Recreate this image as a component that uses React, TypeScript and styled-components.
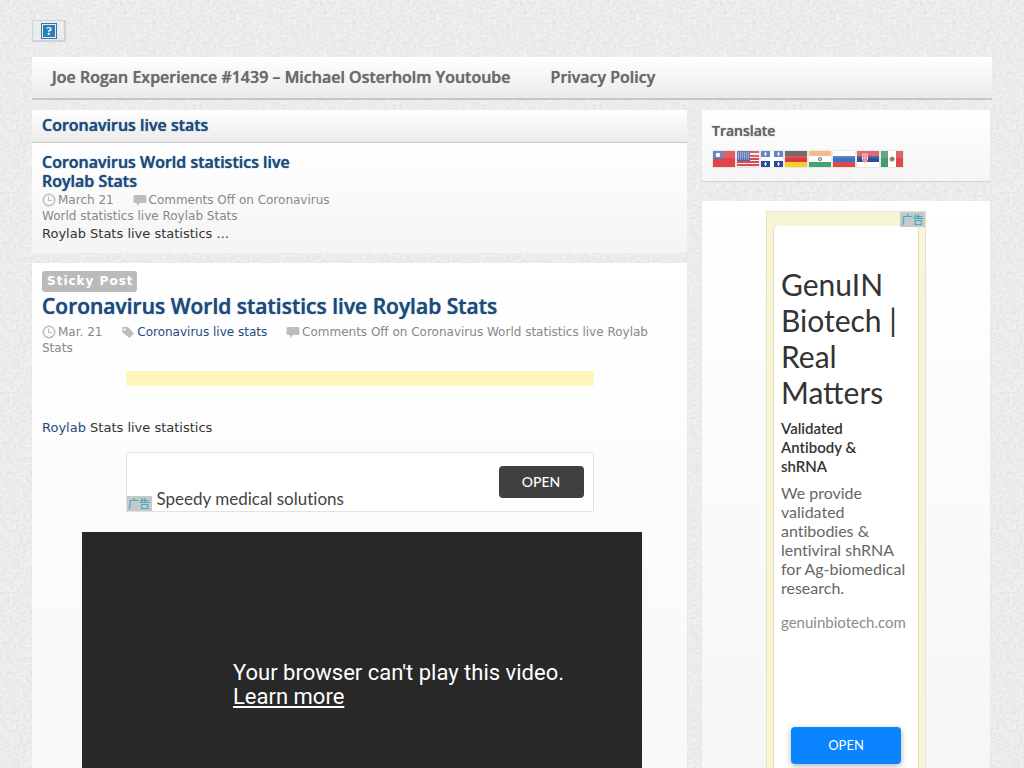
import React from 'react';
import styled, { createGlobalStyle } from 'styled-components';

const HEAD = "'Open Sans', 'Noto Sans', sans-serif";
const BODY = "'DejaVu Sans', sans-serif";
const AD = "Lato, 'Open Sans', sans-serif";
const LINK = '#1e4b7d';

const paper = encodeURIComponent(
  `<svg xmlns="http://www.w3.org/2000/svg" width="200" height="200"><filter id="n" x="0" y="0" width="100%" height="100%" color-interpolation-filters="sRGB"><feTurbulence type="fractalNoise" baseFrequency=".3 .4" numOctaves="2" seed="4" stitchTiles="stitch"/><feColorMatrix values=".1 0 0 0 .874 .1 0 0 0 .874 .1 0 0 0 .874 0 0 0 0 1" /></filter><rect width="200" height="200" filter="url(#n)"/></svg>`
);

const Global = createGlobalStyle`
  * { box-sizing: border-box; }
  body {
    margin: 0;
    font: 13px/18px ${BODY};
    color: #333;
    background: #ececec url("data:image/svg+xml,${paper}");
  }
  a { color: ${LINK}; text-decoration: none; }
  h1, h2, h3, p, figure { margin: 0; }
`;

const Page = styled.div`
  padding: 20px 32px 0;
`;

const LogoLink = styled.a`
  display: flex;
  align-items: center;
  justify-content: center;
  width: 34px;
  height: 22px;
  border: 2px solid #d2d2d2;
  border-width: 1px 2px 2px 1px;
`;

const Nav = styled.nav`
  display: flex;
  gap: 40px;
  margin-top: 15px;
  padding: 0 20px;
  height: 43px;
  background: linear-gradient(#fff, #ebebeb);
  border-bottom: 2px solid #c6c6c6;
`;

const NavLink = styled.a`
  font: 600 16px/40px ${HEAD};
  color: #6b6b6b;
  text-shadow: 0 0 1px #6b6b6b, 1px 1px 0 #fff;
`;

const Columns = styled.div`
  display: flex;
  align-items: flex-start;
  gap: 15px;
  margin-top: 10px;
  padding-right: 2px;
`;

const Main = styled.main`
  flex: 1;
  min-width: 0;
`;

const Sidebar = styled.aside`
  width: 288px;
  flex: none;
`;

const SectionTitle = styled.h2`
  padding: 0 10px 2px;
  font: 600 16px/30px ${HEAD};
  text-shadow: 0 0 1px ${LINK};
  background: linear-gradient(#fff, #ebebeb);
  border-bottom: 1px solid #c8c8c8;
`;

const Featured = styled.section`
  padding: 10px 10px 9px;
  height: 110px;
  background: linear-gradient(#fff, #f4f4f4);
`;

const Preview = styled.div`
  max-width: 300px;
`;

const PreviewTitle = styled.h3`
  margin-bottom: 1px;
  font: 600 16px/19px ${HEAD};
  text-shadow: 0 0 1px ${LINK};
`;

const Excerpt = styled.p`
  margin-top: 1px;
`;

const Meta = styled.p`
  font-size: 12px;
  line-height: 16px;
  color: #888;
`;

const MetaItem = styled.span`
  margin-right: 15px;
  svg { vertical-align: -3px; margin-right: 2px; }
`;

const Article = styled.article`
  margin-top: 10px;
  padding: 8px 10px 40px;
  background: linear-gradient(#fff, #f6f6f6);
  box-shadow: 0 1px 1px #ddd;
`;

const Sticky = styled.span`
  display: inline-block;
  padding: 0 3px 0 5px;
  font-weight: 700;
  font-size: 12px;
  line-height: 21px;
  letter-spacing: 1px;
  color: #fff;
  background: #bbb;
  border-radius: 3px;
  vertical-align: top;
`;

const ArticleTitle = styled.h1`
  margin-bottom: 4px;
  font: 600 21px/28px ${HEAD};
  text-shadow: 0 0 1px ${LINK};
`;

const EmptyAd = styled.div`
  width: 468px;
  max-width: 100%;
  height: 15px;
  margin: 15px auto 33px;
  background: #fff7ba;
`;

const Banner = styled.div`
  position: relative;
  display: flex;
  justify-content: space-between;
  width: 468px;
  max-width: 100%;
  height: 60px;
  margin: 15px auto 20px;
  padding: 13px 9px 1px 30px;
  background: #fff;
  border: 1px solid #e2e2e2;
`;

const BannerText = styled.span`
  align-self: flex-end;
  font: 400 17px/22px ${AD};
  font-variant-ligatures: none;
  color: #444;
`;

const OpenDark = styled.button`
  width: 85px;
  height: 32px;
  padding: 0;
  border: 0;
  border-radius: 4px;
  background: #404040;
  color: #fff;
  font: 500 14px/30px ${AD};
`;

const AdTag = styled.span<{ $corner: 'top' | 'bottom' }>`
  position: absolute;
  ${(p) => (p.$corner === 'top' ? 'top: 0; right: 0;' : 'bottom: 0; left: 0;')}
  width: 25px;
  height: 15px;
  background: #c6c8c9;
  color: #17a7bd;
  font: 11px/14px 'Noto Sans CJK SC', sans-serif;
  text-align: center;
`;

const Video = styled.figure`
  display: flex;
  align-items: center;
  width: 560px;
  max-width: 100%;
  height: 315px;
  margin-left: 40px;
  padding: 0 20px 10px 151px;
  background: #282828;
  color: #fff;
  font: 400 22px/24px Roboto, sans-serif;
  a { color: #fff; text-decoration: underline; }
`;

const Widget = styled.section`
  margin-bottom: 20px;
  padding: 10px;
  background: linear-gradient(#fff, #f5f5f5);
  box-shadow: 0 1px 1px #d4d4d4;
`;

const WidgetTitle = styled.h3`
  font: 600 14px/22px ${HEAD};
  text-shadow: 0 0 1px #666;
  color: #666;
`;

const Flags = styled.div`
  display: flex;
  margin-top: 8px;
  padding-bottom: 3px;
  svg { display: block; }
`;

const SkyAd = styled.div`
  position: relative;
  width: 160px;
  height: 600px;
  margin: 0 auto;
  padding: 14px 6px 7px;
  background: #f7f5d6;
  border: 1px solid #e6e4cc;
`;

const SkyBody = styled.div`
  height: 100%;
  padding: 40px 7px 0;
  background: #fff;
  border: 1px solid #e2dfb8;
  border-width: 0 1px;
  border-radius: 5px;
  font-family: ${AD};
  font-size: 16px;
  line-height: 19px;
`;

const SkyTitle = styled.h2`
  font-weight: 400;
  font-size: 30px;
  line-height: 36px;
  color: #333;
`;

const SkyLead = styled.h3`
  max-width: 110px;
  margin-top: 9px;
  font-size: 15px;
  font-weight: 600;
  color: #333;
  font-variant-ligatures: none;
`;

const SkyText = styled.p`
  margin-top: 7px;
  color: #666;
  font-variant-ligatures: none;
`;

const SkyUrl = styled.p`
  margin-top: 16px;
  font-size: 15px;
  color: #8c8c8c;
`;

const OpenBlue = styled.button`
  display: block;
  width: 110px;
  height: 37px;
  margin: 95px auto 0;
  padding: 0;
  border: 0;
  border-radius: 4px;
  background: #0a84ff;
  box-shadow: 0 2px 6px rgba(0, 0, 0, .3);
  color: #fff;
  font: 400 13px/35px ${AD};
`;

const Clock = () => (
  <svg width="14" height="14" viewBox="0 0 14 14" fill="none" stroke="#bdbdbd" aria-hidden="true">
    <circle cx="7" cy="7" r="5.7" strokeWidth="1.5" />
    <path d="M6.5 3.5V7.5H10" strokeWidth="1.2" />
  </svg>
);

const Bubble = () => (
  <svg width="14" height="14" viewBox="0 0 14 14" fill="#bdbdbd" aria-hidden="true">
    <path d="M2 2h10q1.500 0 1.500 1.500v5q0 1.500-1.500 1.500H7L4 13v-3H2Q.5 10 .5 8.500v-5Q.5 2 2 2z" />
  </svg>
);

const Tag = () => (
  <svg width="14" height="14" viewBox="0 0 14 14" fill="#bdbdbd" aria-hidden="true">
    <path fillRule="evenodd" d="M1 2.500L1.500 2H7l6 6.500-4.500 4.500L1.500 7.500zM3.500 3.300a1.100 1.100 0 1 0 .01 0z" />
  </svg>
);

type Stripe = [string, number, number, number, number];
const star = '#eef2fb';
const flags: { name: string; shapes: Stripe[]; extra?: React.ReactNode }[] = [
  { name: 'Chinese', shapes: [['#e0454c', 0, 0, 22, 16], ['#4a73bd', 0, 0, 10, 8]], extra: <circle cx="5" cy="4" r="2.300" fill="#fff" /> },
  {
    name: 'English',
    shapes: [['#f6e9ea', 0, 0, 22, 16], ...[0, 4, 7, 10, 13].map((y): Stripe => ['#da4a55', 0, y, 22, 2]), ['#5468ab', 0, 0, 13, 10]],
    extra: <path d="M1 2h11M1 4h11M1 6h11M1 8h11" stroke="#c5cde6" strokeDasharray="1 1" />,
  },
  {
    name: 'French',
    shapes: [['#fff', 0, 0, 22, 16], ['#5470b8', 0, 0, 9, 6], ['#5470b8', 13, 0, 9, 6], ['#2c4897', 0, 10, 9, 6], ['#2c4897', 13, 10, 9, 6]],
    extra: <path d="M4.500 1v4M3 3h3M17.500 1v4M16 3h3M4.500 11v4M3 13h3M17.500 11v4M16 13h3" stroke={star} />,
  },
  { name: 'German', shapes: [['#5a5451', 0, 0, 22, 5], ['#da3a3c', 0, 5, 22, 6], ['#f8cf2c', 0, 11, 22, 5]] },
  { name: 'Hindi', shapes: [['#f4b279', 0, 0, 22, 5], ['#fff', 0, 5, 22, 6], ['#42a468', 0, 11, 22, 5]], extra: <circle cx="11" cy="8" r="1.800" fill="#b8c4d8" stroke="#7488ad" /> },
  { name: 'Russian', shapes: [['#fff', 0, 0, 22, 5], ['#3f72bd', 0, 5, 22, 6], ['#e0454c', 0, 11, 22, 5]] },
  {
    name: 'Serbian',
    shapes: [['#dc525b', 0, 0, 22, 5], ['#304d94', 0, 5, 22, 6], ['#fff', 0, 11, 22, 5]],
    extra: <path d="M5.500 3h5v6l-2.500 3-2.500-3zM8 4v7M6 7h4" fill="#e2606a" stroke="#f3c6c4" />,
  },
  {
    name: 'Spanish',
    shapes: [['#3f9e6b', 0, 0, 7, 16], ['#fff', 7, 0, 8, 16], ['#dc4a50', 15, 0, 7, 16]],
    extra: <><circle cx="11" cy="8" r="2.500" fill="#a08a60" /><circle cx="11.500" cy="7.500" r="1" fill="#6d5334" /></>,
  },
];

const Flag = ({ shapes, extra }: { shapes: Stripe[]; extra?: React.ReactNode }) => (
  <svg width="24" height="18" viewBox="-1 -1 24 18" aria-hidden="true">
    <rect x="-.5" y="-.5" width="23" height="17" fill="#d8d8d8" />
    {shapes.map(([fill, x, y, w, h], i) => (
      <rect key={i} x={x} y={y} width={w} height={h} fill={fill} />
    ))}
    {extra}
    <rect width="22" height="7" fill="#fff" opacity=".14" />
  </svg>
);

export default function App() {
  return (
    <>
      <Global />
      <Page>
        <header>
          <LogoLink href="#" aria-label="Home">
            <svg width="16" height="16" viewBox="0 0 16 16" aria-hidden="true">
              <rect width="16" height="16" fill="#2e7cb0" />
              <rect x="1.500" y="1.500" width="13" height="13" fill="#2e7fb8" stroke="#e6f2f8" />
              <text x="8" y="12" textAnchor="middle" fontFamily="Liberation Serif, serif" fontWeight="700" fontSize="12" fill="#fff">?</text>
            </svg>
          </LogoLink>
          <Nav>
            <NavLink href="#">Joe Rogan Experience #1439 – Michael Osterholm Youtoube</NavLink>
            <NavLink href="#">Privacy Policy</NavLink>
          </Nav>
        </header>
        <Columns>
          <Main>
            <SectionTitle><a href="#">Coronavirus live stats</a></SectionTitle>
            <Featured>
              <Preview>
                <PreviewTitle><a href="#">Coronavirus World statistics live Roylab Stats</a></PreviewTitle>
                <Meta>
                  <MetaItem><Clock />March 21</MetaItem>{' '}
                  <MetaItem><Bubble />Comments Off on Coronavirus World statistics live Roylab Stats</MetaItem>
                </Meta>
                <Excerpt>Roylab Stats live statistics ...</Excerpt>
              </Preview>
            </Featured>
            <Article>
              <Sticky>Sticky Post</Sticky>
              <ArticleTitle><a href="#">Coronavirus World statistics live Roylab Stats</a></ArticleTitle>
              <Meta>
                <MetaItem><Clock />Mar. 21</MetaItem>{' '}
                <MetaItem><Tag /><a href="#">Coronavirus live stats</a></MetaItem>{' '}
                <MetaItem><Bubble />Comments Off on Coronavirus World statistics live Roylab Stats</MetaItem>
              </Meta>
              <EmptyAd />
              <p><a href="#">Roylab</a> Stats live statistics</p>
              <Banner>
                <BannerText>Speedy medical solutions</BannerText>
                <OpenDark type="button">OPEN</OpenDark>
                <AdTag $corner="bottom">广告</AdTag>
              </Banner>
              <Video>
                <p>Your browser can't play this video.<br /><a href="#">Learn more</a></p>
              </Video>
            </Article>
          </Main>
          <Sidebar>
            <Widget>
              <WidgetTitle>Translate</WidgetTitle>
              <Flags>
                {flags.map((f) => (
                  <a key={f.name} href="#" aria-label={f.name}><Flag shapes={f.shapes} extra={f.extra} /></a>
                ))}
              </Flags>
            </Widget>
            <Widget>
              <SkyAd>
                <SkyBody>
                  <SkyTitle>GenuIN Biotech | Real Matters</SkyTitle>
                  <SkyLead>Validated Antibody &amp; shRNA</SkyLead>
                  <SkyText>We provide validated antibodies &amp; lentiviral shRNA for Ag-biomedical research.</SkyText>
                  <SkyUrl>genuinbiotech.com</SkyUrl>
                  <OpenBlue type="button">OPEN</OpenBlue>
                </SkyBody>
                <AdTag $corner="top">广告</AdTag>
              </SkyAd>
            </Widget>
          </Sidebar>
        </Columns>
      </Page>
    </>
  );
}
